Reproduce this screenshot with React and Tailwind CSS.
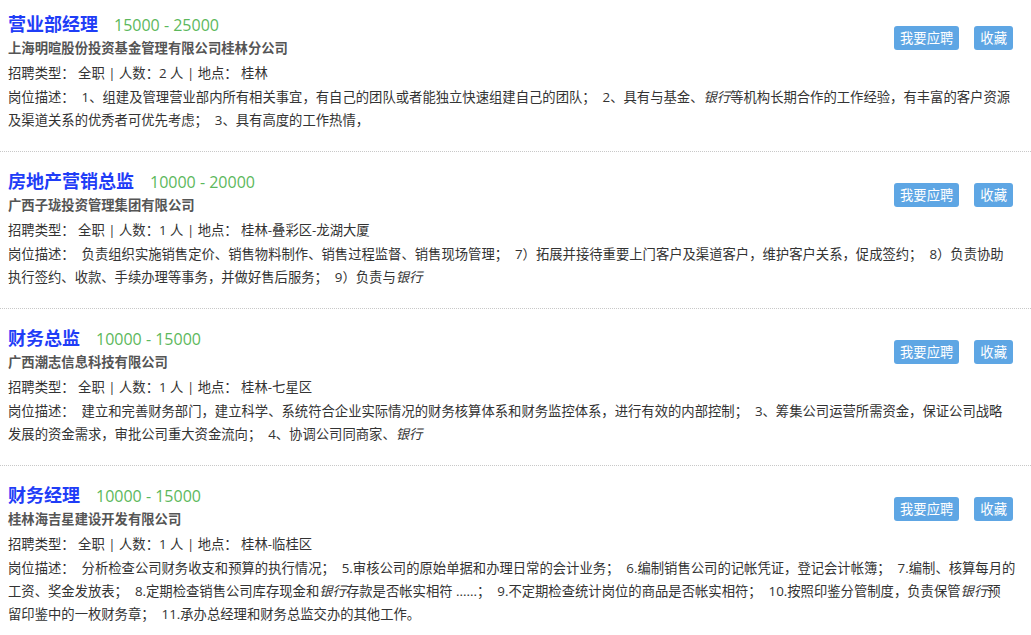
import React from "react";

const jobs = [
  {
    title: "营业部经理",
    salary: "15000 - 25000",
    company: "上海明暄股份投资基金管理有限公司桂林分公司",
    count: "2",
    place: "桂林",
    desc: [
      ["岗位描述：\u00a0 1、组建及管理营业部内所有相关事宜，有自己的团队或者能独立快速组建自己的团队；\u00a0 2、具有与基金、", { em: "银行" }, "等机构长期合作的工作经验，有丰富的客户资源"],
      ["及渠道关系的优秀者可优先考虑；\u00a0 3、具有高度的工作热情，"],
    ],
  },
  {
    title: "房地产营销总监",
    salary: "10000 - 20000",
    company: "广西子珑投资管理集团有限公司",
    count: "1",
    place: "桂林-叠彩区-龙湖大厦",
    desc: [
      ["岗位描述：\u00a0 负责组织实施销售定价、销售物料制作、销售过程监督、销售现场管理；\u00a0 7）拓展并接待重要上门客户及渠道客户，维护客户关系，促成签约；\u00a0 8）负责协助"],
      ["执行签约、收款、手续办理等事务，并做好售后服务；\u00a0 9）负责与", { em: "银行" }],
    ],
  },
  {
    title: "财务总监",
    salary: "10000 - 15000",
    company: "广西潮志信息科技有限公司",
    count: "1",
    place: "桂林-七星区",
    desc: [
      ["岗位描述：\u00a0 建立和完善财务部门，建立科学、系统符合企业实际情况的财务核算体系和财务监控体系，进行有效的内部控制；\u00a0 3、筹集公司运营所需资金，保证公司战略"],
      ["发展的资金需求，审批公司重大资金流向；\u00a0 4、协调公司同商家、", { em: "银行" }],
    ],
  },
  {
    title: "财务经理",
    salary: "10000 - 15000",
    company: "桂林海吉星建设开发有限公司",
    count: "1",
    place: "桂林-临桂区",
    desc: [
      ["岗位描述：\u00a0 分析检查公司财务收支和预算的执行情况；\u00a0 5.审核公司的原始单据和办理日常的会计业务；\u00a0 6.编制销售公司的记帐凭证，登记会计帐簿；\u00a0 7.编制、核算每月的"],
      ["工资、奖金发放表；\u00a0 8.定期检查销售公司库存现金和", { em: "银行" }, "存款是否帐实相符 ......；\u00a0 9.不定期检查统计岗位的商品是否帐实相符；\u00a0 10.按照印鉴分管制度，负责保管", { em: "银行" }, "预"],
      ["留印鉴中的一枚财务章；\u00a0 11.承办总经理和财务总监交办的其他工作。"],
    ],
  },
];

function JobItem({ job, first, last }) {
  return (
    <div
      className={`pl-[8px] pr-[18px] ${first ? "pt-[10px]" : "pt-[15px]"} pb-[19px] ${
        last ? "" : "border-b border-dotted border-[#c8c8c8]"
      }`}
    >
      {/* ---- Header: title, salary, company + buttons ---- */}
      <div className="flex items-start justify-between">
        <div>
          <div className="flex items-baseline h-[28px] leading-[28px]">
            <span className="text-[18px] font-bold text-[#1f3df7]">{job.title}</span>
            <span className="ml-[16px] text-[16px] text-[#5cb85c]">{job.salary}</span>
          </div>
          <div className="text-[13.33px] leading-[20px] font-bold text-[#555]">{job.company}</div>
        </div>
        <div className="flex pt-[16px]">
          <button className="h-[24px] px-[6px] rounded-[3px] bg-[#5ea6e4] text-white text-[13.33px] leading-[24px]">
            我要应聘
          </button>
          <button className="ml-[15px] h-[24px] px-[6px] rounded-[3px] bg-[#5ea6e4] text-white text-[13.33px] leading-[24px]">
            收藏
          </button>
        </div>
      </div>

      {/* ---- Meta line ---- */}
      <div className="mt-[3px] text-[13.33px] leading-[24px] text-[#333]">
        招聘类型： 全职 | 人数：{job.count} 人 | 地点： {job.place}
      </div>

      {/* ---- Description ---- */}
      <div className="mt-[1px] text-[13.33px] leading-[23px] text-[#333]">
        {job.desc.map((line, i) => (
          <div key={i} className="whitespace-nowrap">
            {line.map((part, j) =>
              typeof part === "string" ? (
                <span key={j}>{part}</span>
              ) : (
                <em key={j} className="italic">
                  {part.em}
                </em>
              )
            )}
          </div>
        ))}
      </div>
    </div>
  );
}

export default function App() {
  return (
    <div
      className="w-[1031px] h-[635px] overflow-hidden bg-white"
      style={{ fontFamily: '"Open Sans", "Noto Sans CJK SC", sans-serif' }}
    >
      {jobs.map((job, i) => (
        <JobItem key={i} job={job} first={i === 0} last={i === jobs.length - 1} />
      ))}
    </div>
  );
}
